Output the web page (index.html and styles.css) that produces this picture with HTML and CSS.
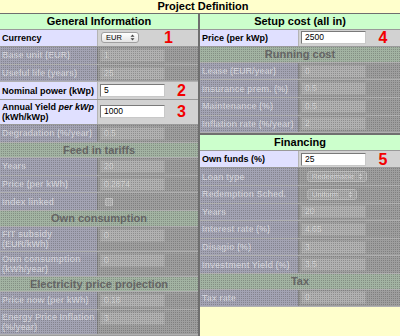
FILE: index.html
```html
<!DOCTYPE html>
<html>
<head>
<meta charset="utf-8">
<link rel="stylesheet" href="styles.css">
</head>
<body>
<div class="title">Project Definition</div>
<div class="cols">
  <div class="left">
    <div class="hdr">General Information</div>
    <div class="row"><div class="lab">Currency</div><div class="val"><span class="sel w38">EUR<svg class="arr" width="5" height="7" viewBox="0 0 5 7"><path d="M2.5 0.5L4.5 2.8H0.5Z M2.5 6.5L4.5 4.2H0.5Z" fill="#444"/></svg></span><span class="num">1</span></div></div>
    <div class="row dis"><div class="lab">Base unit (EUR)</div><div class="val"><span class="inp">1</span></div></div>
    <div class="row dis"><div class="lab">Useful life (years)</div><div class="val"><span class="inp">25</span></div></div>
    <div class="row"><div class="lab">Nominal power (kWp)</div><div class="val"><span class="inp">5</span><span class="num">2</span></div></div>
    <div class="row two"><div class="lab"><span>Annual Yield <i>per kWp</i> (kWh/kWp)</span></div><div class="val"><span class="inp">1000</span><span class="num">3</span></div></div>
    <div class="row dis"><div class="lab">Degradation (%/year)</div><div class="val"><span class="inp">0.5</span></div></div>
    <div class="hdr dis">Feed in tariffs</div>
    <div class="row dis"><div class="lab">Years</div><div class="val"><span class="inp">20</span></div></div>
    <div class="row dis"><div class="lab">Price (per kWh)</div><div class="val"><span class="inp">0.2874</span></div></div>
    <div class="row dis"><div class="lab">Index linked</div><div class="val"><span class="chk"></span></div></div>
    <div class="hdr dis">Own consumption</div>
    <div class="row two dis"><div class="lab"><span>FIT subsidy (EUR/kWh)</span></div><div class="val top"><span class="inp">0</span></div></div>
    <div class="row two dis"><div class="lab"><span>Own consumption (kWh/year)</span></div><div class="val top"><span class="inp">0</span></div></div>
    <div class="hdr dis">Electricity price projection</div>
    <div class="row dis"><div class="lab">Price now (per kWh)</div><div class="val"><span class="inp">0.18</span></div></div>
    <div class="row two dis"><div class="lab"><span>Energy Price Inflation (%/year)</span></div><div class="val top"><span class="inp">3</span></div></div>
  </div>
  <div class="right">
    <div class="hdr">Setup cost (all in)</div>
    <div class="row"><div class="lab">Price (per kWp)</div><div class="val"><span class="inp">2500</span><span class="num">4</span></div></div>
    <div class="hdr dis">Running cost</div>
    <div class="row dis"><div class="lab">Lease (EUR/year)</div><div class="val"><span class="inp">0</span></div></div>
    <div class="row dis"><div class="lab">Insurance prem. (%)</div><div class="val"><span class="inp">0.5</span></div></div>
    <div class="row dis"><div class="lab">Maintenance (%)</div><div class="val"><span class="inp">0.5</span></div></div>
    <div class="row dis"><div class="lab">Inflation rate (%/year)</div><div class="val"><span class="inp">2</span></div></div>
    <div class="fin">
      <div class="hdr">Financing</div>
      <div class="row"><div class="lab">Own funds (%)</div><div class="val"><span class="inp">25</span><span class="num">5</span></div></div>
      <div class="row dis"><div class="lab">Loan type</div><div class="val"><span class="sel w60">Redeemable<svg class="arr" width="5" height="7" viewBox="0 0 5 7"><path d="M2.5 0.5L4.5 2.8H0.5Z M2.5 6.5L4.5 4.2H0.5Z" fill="#d0d0d0"/></svg></span></div></div>
      <div class="row dis"><div class="lab">Redemption Sched.</div><div class="val"><span class="sel w50">Uniform<svg class="arr" width="5" height="7" viewBox="0 0 5 7"><path d="M2.5 0.5L4.5 2.8H0.5Z M2.5 6.5L4.5 4.2H0.5Z" fill="#d0d0d0"/></svg></span></div></div>
      <div class="row dis"><div class="lab">Years</div><div class="val"><span class="inp">20</span></div></div>
      <div class="row dis"><div class="lab">Interest rate (%)</div><div class="val"><span class="inp">4.65</span></div></div>
      <div class="row dis"><div class="lab">Disagio (%)</div><div class="val"><span class="inp">3</span></div></div>
      <div class="row dis"><div class="lab">Investment Yield (%)</div><div class="val"><span class="inp">3.5</span></div></div>
      <div class="hdr dis">Tax</div>
      <div class="row dis"><div class="lab">Tax rate</div><div class="val"><span class="inp">0</span></div></div>
    </div>
  </div>
</div>
</body>
</html>
```

FILE: styles.css
```css
html, body {
  margin: 0;
  padding: 0;
}
body {
  width: 400px;
  height: 336px;
  overflow: hidden;
  background: #ffffcc;
  font-family: "Liberation Sans", Arial, sans-serif;
  color: #000;
}
.title {
  height: 14px;
  box-sizing: border-box;
  border-bottom: 1px solid #6f6f6f;
  text-align: center;
  font-weight: bold;
  font-size: 11px;
  line-height: 13px;
  padding-left: 6px;
}
.cols {
  display: flex;
  align-items: flex-start;
}
.left {
  width: 198px;
  height: 330px;
  border-right: 2px solid #6f6f6f;
  background: #9c9c9c;
}
.right {
  flex: 1;
}
.fin {
  border-top: 2px solid #6f6f6f;
}
.hdr {
  height: 15.6px;
  box-sizing: border-box;
  background: #ccffcc;
  border-bottom: 1px solid #9a9a9a;
  text-align: center;
  font-weight: bold;
  font-size: 11px;
  line-height: 14px;
}
.row {
  display: grid;
  grid-template-columns: 98px 1fr;
  height: 17.6px;
  box-sizing: border-box;
  border-bottom: 1px solid #9a9a9a;
}
.right .row {
  grid-template-columns: 99px 1fr;
}
.row.two {
  height: 25px;
}
.lab {
  background: #e0e0ff;
  border-right: 1px solid #b4b4b4;
  font-weight: bold;
  font-size: 9px;
  line-height: 10px;
  padding: 0 1px 0 2px;
  display: flex;
  align-items: center;
  white-space: normal;
}
.val {
  background: #d2d2d2;
  display: flex;
  align-items: center;
  padding-left: 2px;
}
.val.top {
  align-items: flex-start;
  padding-top: 2px;
}
.inp {
  width: 65px;
  height: 13px;
  box-sizing: border-box;
  background: #fff;
  border: 1px solid;
  border-color: #7a7a7a #c8c8c8 #c8c8c8 #7a7a7a;
  font-size: 8.5px;
  line-height: 11px;
  padding-left: 3px;
}
.num {
  flex: 1;
  text-align: center;
  color: #f20000;
  font-weight: bold;
  font-size: 16px;
  line-height: 15px;
}
.sel {
  display: inline-flex;
  align-items: center;
  justify-content: space-between;
  height: 11px;
  box-sizing: border-box;
  margin-left: 1px;
  border: 1px solid #a0a0a0;
  border-radius: 3px;
  background: linear-gradient(#ffffff, #e4e4e4);
  font-size: 7.5px;
  line-height: 9px;
  padding: 0 3px 0 4px;
}
.w38 { width: 38px; }
.w60 { width: 60px; margin-left: 6px; }
.w50 { width: 50px; margin-left: 6px; }
.chk {
  width: 6px;
  height: 6px;
  margin-left: 5px;
  border: 1px solid #c4c4c4;
  border-radius: 1px;
  background: #b4b4b4;
}

/* disabled (greyed-out) sections */
.dis {
  position: relative;
}
.dis::after {
  content: "";
  position: absolute;
  inset: 0;
  background: conic-gradient(rgba(60, 60, 60, 0.3) 0 25%, transparent 0) 0 0 / 2px 2px;
  pointer-events: none;
}
.row.dis {
  border-bottom-color: #b0b0b0;
}
.dis .lab {
  background: #a3a3b3;
  color: #d0d0d8;
  border-right-color: #858585;
}
.dis .val {
  background: #9e9e9e;
}
.dis .inp {
  background: #b1b1b1;
  border-color: #a8a8a8;
  color: #d4d4d4;
}
.dis .sel {
  background: #acacac;
  border-color: #bcbcbc;
  color: #d8d8d8;
}
.hdr.dis {
  background: #a2b3a2;
  color: #686868;
  border-bottom-color: #b0b0b0;
}
```
